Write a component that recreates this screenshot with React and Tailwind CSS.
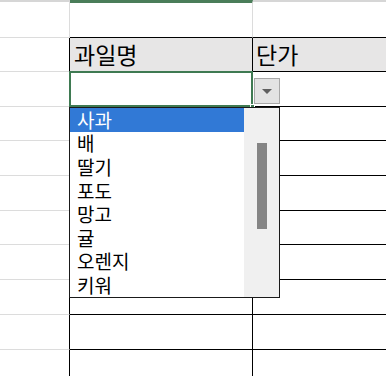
import React from 'react'

const FONT = { fontFamily: '"Liberation Sans", "Noto Sans CJK KR", sans-serif' }

const rows = [
  { h: 'h-[38px]', kind: 'top' },
  { h: 'h-[34px]', kind: 'header' },
  { h: 'h-[35px]', kind: 'active' },
  { h: 'h-[34px]' },
  { h: 'h-[35px]' },
  { h: 'h-[35px]' },
  { h: 'h-[34px]' },
  { h: 'h-[35px]' },
  { h: 'h-[35px]' },
  { h: 'h-[35px]' },
  { h: 'h-[35px]' },
]

const fruits = ['사과', '배', '딸기', '포도', '망고', '귤', '오렌지', '키워']

function Row({ row }) {
  const top = row.kind === 'top'
  const header = row.kind === 'header'
  return (
    <div className={`flex ${row.h}`}>
      <div
        className={`w-[70px] shrink-0 border-b border-r border-b-[#dcdcdc] ${
          top ? 'border-r-[#dcdcdc] border-t-2 border-t-[#d6d6d6]' : 'border-r-black'
        }`}
      />
      <div
        className={`relative w-[183px] shrink-0 border-b border-r flex items-center pl-[4px] pt-[3px] ${
          top
            ? 'border-b-black border-r-[#dcdcdc] border-t-[3px] border-t-[#4a7d59]'
            : 'border-black'
        } ${header ? 'bg-[#e7e6e6]' : ''}`}
      >
        {header && <span className="text-[23px] leading-none text-black">과일명</span>}
        {row.kind === 'active' && (
          <>
            <div className="absolute -left-[1px] -top-[1px] -right-[1px] -bottom-[1px] border-2 border-[#3f7a52]" />
            <div className="absolute -right-[3px] -bottom-[3px] w-[5px] h-[5px] bg-[#3f7a52] border border-white" />
          </>
        )}
      </div>
      <div
        className={`flex-1 border-b flex items-center pl-[3px] pt-[3px] ${
          top ? 'border-b-black border-t-2 border-t-[#d6d6d6]' : 'border-black'
        } ${header ? 'bg-[#e7e6e6]' : ''}`}
      >
        {header && <span className="text-[23px] leading-none text-black">단가</span>}
      </div>
    </div>
  )
}

export default function App() {
  return (
    <div className="relative w-[386px] h-[376px] overflow-hidden bg-white" style={FONT}>
      {rows.map((r, i) => (
        <Row key={i} row={r} />
      ))}

      {/* dropdown button */}
      <div className="absolute left-[254px] top-[78px] w-[26px] h-[26px] bg-[#e3e3e3] border border-[#a8a8a8] flex items-center justify-center">
        <div className="w-0 h-0 border-l-[5px] border-r-[5px] border-t-[5px] border-l-transparent border-r-transparent border-t-[#5f5f5f]" />
      </div>

      {/* list */}
      <div className="absolute left-[69px] top-[107px] w-[211px] h-[191px] border border-[#1a1a1a] bg-white flex">
        <div className="w-[174px] flex flex-col">
          {fruits.map((f, i) => (
            <div
              key={f}
              className={`h-[23.6px] shrink-0 flex items-center pl-[7px] pt-[3px] text-[19px] leading-none ${
                i === 0 ? 'bg-[#3179d6] text-white' : 'text-black'
              }`}
            >
              {f}
            </div>
          ))}
        </div>
        <div className="flex-1 bg-[#f0f0f0] relative">
          <div className="absolute left-[13px] top-[35px] w-[10px] h-[86px] bg-[#858585]" />
        </div>
      </div>
    </div>
  )
}
